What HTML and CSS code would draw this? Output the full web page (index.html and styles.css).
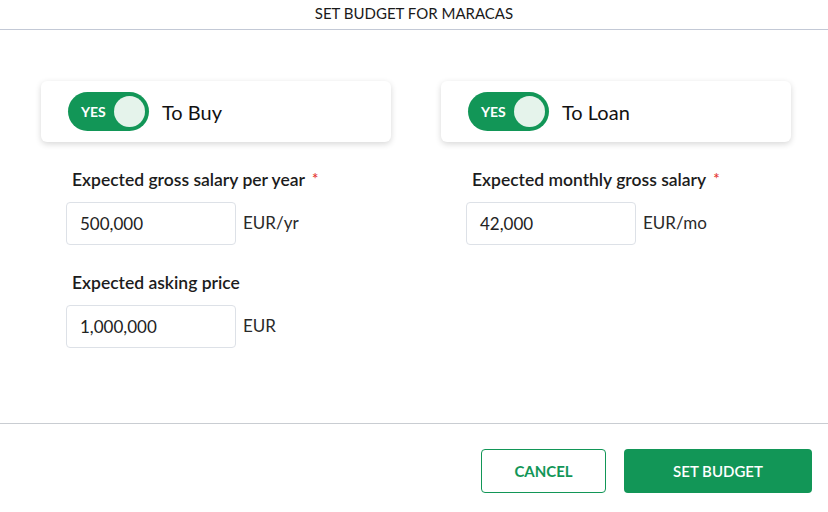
FILE: index.html
```html
<!DOCTYPE html>
<html>
<head>
    <title>Set Budget</title>
    <link rel="stylesheet" href="styles.css">
</head>
<body>
    <div class="modal">
        <div class="modal-header">SET BUDGET FOR MARACAS</div>
        <div class="modal-body">
            <div class="column">
                <div class="card">
                    <div class="toggle"><span class="toggle-label">YES</span><span class="knob"></span></div>
                    <div class="card-title">To Buy</div>
                </div>
                <div class="field">
                    <div class="label">Expected gross salary per year <span class="req">*</span></div>
                    <div class="input-row">
                        <div class="input">500,000</div>
                        <div class="unit">EUR/yr</div>
                    </div>
                </div>
                <div class="field">
                    <div class="label">Expected asking price</div>
                    <div class="input-row">
                        <div class="input">1,000,000</div>
                        <div class="unit">EUR</div>
                    </div>
                </div>
            </div>
            <div class="column">
                <div class="card">
                    <div class="toggle"><span class="toggle-label">YES</span><span class="knob"></span></div>
                    <div class="card-title">To Loan</div>
                </div>
                <div class="field">
                    <div class="label">Expected monthly gross salary <span class="req">*</span></div>
                    <div class="input-row">
                        <div class="input">42,000</div>
                        <div class="unit">EUR/mo</div>
                    </div>
                </div>
            </div>
        </div>
        <div class="modal-footer">
            <div class="btn btn-outline">CANCEL</div>
            <div class="btn btn-primary">SET BUDGET</div>
        </div>
    </div>
</body>
</html>
```

FILE: styles.css
```css
body {
    margin: 0;
    padding: 0;
    width: 828px;
    height: 512px;
    background: #ffffff;
    font-family: Lato, "Open Sans", sans-serif;
    color: #1a1a1a;
    overflow: hidden;
}
.modal {
    height: 512px;
    display: flex;
    flex-direction: column;
}
.modal-header {
    height: 30px;
    line-height: 27px;
    text-align: center;
    font-size: 15px;
    border-bottom: 1px solid #c3c9d6;
    box-sizing: border-box;
}
.modal-body {
    flex: 1;
    display: flex;
    gap: 50px;
    padding: 51px 0 0 41px;
}
.column {
    width: 350px;
}
.card {
    height: 61px;
    background: #fff;
    border-radius: 6px;
    box-shadow: 0 2px 6px rgba(0, 0, 0, 0.16);
    display: flex;
    align-items: center;
    padding-left: 27px;
    gap: 13px;
}
.toggle {
    width: 81px;
    height: 39px;
    border-radius: 20px;
    background: #129657;
    display: flex;
    align-items: center;
    justify-content: space-between;
    padding: 0 4px 0 13px;
    box-sizing: border-box;
}
.toggle-label {
    color: #fff;
    font-size: 14px;
    font-weight: 700;
}
.knob {
    width: 31px;
    height: 31px;
    border-radius: 50%;
    background: #e5f3eb;
}
.card-title {
    font-size: 20px;
    color: #111;
}
.field {
    padding-left: 25px;
    margin-top: 28px;
}
.label {
    padding-left: 6px;
    font-size: 17.5px;
    font-weight: 600;
    line-height: 20px;
    color: #1c1c1c;
}
.req {
    color: #e53935;
    font-size: 15px;
    margin-left: 3px;
    line-height: 0;
    vertical-align: 2px;
}
.input-row {
    display: flex;
    align-items: center;
    gap: 7px;
    margin-top: 12px;
}
.input {
    width: 170px;
    height: 43px;
    box-sizing: border-box;
    border: 1px solid #dde1e7;
    border-radius: 4px;
    padding-left: 13px;
    font-size: 17px;
    line-height: 41px;
    color: #222;
}
.unit {
    font-size: 17px;
    color: #2a2a2a;
    margin-bottom: 3px;
}
.modal-footer {
    height: 89px;
    border-top: 1px solid #c9cdd2;
    display: flex;
    justify-content: flex-end;
    align-items: flex-start;
    gap: 18px;
    padding: 25px 16px 0 0;
    box-sizing: border-box;
}
.btn {
    height: 44px;
    box-sizing: border-box;
    border-radius: 4px;
    display: flex;
    align-items: center;
    justify-content: center;
    font-size: 15px;
    font-weight: 700;
}
.btn-outline {
    width: 125px;
    border: 1px solid #129657;
    color: #129657;
}
.btn-primary {
    width: 188px;
    background: #129657;
    color: #fff;
    font-weight: 600;
}
```
